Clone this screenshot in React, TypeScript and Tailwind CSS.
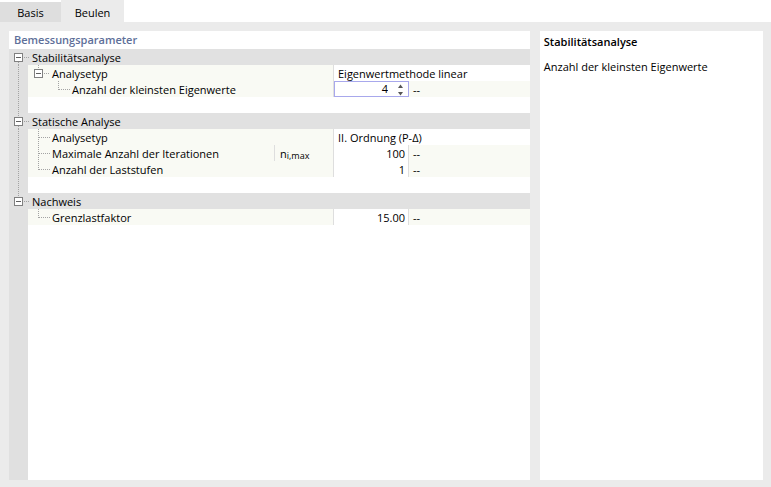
import React, { useState } from "react";

type Param = {
  label: string;
  level: 1 | 2;
  value: string;
  kind: "text" | "number" | "spin";
  symbol?: React.ReactNode;
  expandable?: boolean;
};

type Group = {
  title: string;
  params: Param[];
};

const groups: Group[] = [
  {
    title: "Stabilitätsanalyse",
    params: [
      { label: "Analysetyp", level: 1, value: "Eigenwertmethode linear", kind: "text", expandable: true },
      { label: "Anzahl der kleinsten Eigenwerte", level: 2, value: "4", kind: "spin" },
    ],
  },
  {
    title: "Statische Analyse",
    params: [
      { label: "Analysetyp", level: 1, value: "II. Ordnung (P-Δ)", kind: "text" },
      {
        label: "Maximale Anzahl der Iterationen",
        level: 1,
        value: "100",
        kind: "number",
        symbol: (
          <span className="flex">
            n<span className="pt-[2px] text-[9px]">i,max</span>
          </span>
        ),
      },
      { label: "Anzahl der Laststufen", level: 1, value: "1", kind: "number" },
    ],
  },
  {
    title: "Nachweis",
    params: [{ label: "Grenzlastfaktor", level: 1, value: "15.00", kind: "number" }],
  },
];

const Dots = ({ d }: { d: string }) => (
  <path d={d} fill="none" stroke="#a3a3a3" strokeDasharray="1 1" shapeRendering="crispEdges" />
);

const ToggleBox = ({ x }: { x: number }) => (
  <g shapeRendering="crispEdges">
    <rect x={x + 0.5} y="4.5" width="8" height="8" fill="#fff" stroke="#808080" />
    <path d={`M${x + 2} 8.5h5`} stroke="#606060" />
  </g>
);

// Gutter line that runs from the first group down to the last one
const GutterLine = () => (
  <svg width="19" height="16" className="block">
    <Dots d="M9.5 0v16" />
  </svg>
);

const GroupGutter = ({ first, last }: { first: boolean; last: boolean }) => (
  <svg width="19" height="16" className="block">
    {!first && <Dots d="M9.5 0v4" />}
    {!last && <Dots d="M9.5 13v3" />}
    <Dots d="M15 8.5h4" />
    <ToggleBox x={5} />
  </svg>
);

const Branch = ({ param, last }: { param: Param; last: boolean }) => {
  if (param.expandable) {
    return (
      <button type="button" aria-label="Analysetyp einklappen" className="block">
        <svg width="24" height="16" className="block">
          <Dots d="M10.5 0v4" />
          <Dots d="M16 8.5h6" />
          <ToggleBox x={6} />
        </svg>
      </button>
    );
  }
  if (param.level === 2) {
    return (
      <svg width="44" height="16" className="block">
        <Dots d="M30.5 0v9" />
        <Dots d="M31 8.5h11" />
      </svg>
    );
  }
  return (
    <svg width="24" height="16" className="block">
      <Dots d={last ? "M10.5 0v9" : "M10.5 0v16"} />
      <Dots d="M11 8.5h11" />
    </svg>
  );
};

const SpinBox = ({ label, initial }: { label: string; initial: number }) => {
  const [count, setCount] = useState(initial);
  return (
    <div className="-mr-px flex h-4 border border-[#a8a8ec] bg-white">
      <input
        type="text"
        inputMode="numeric"
        aria-label={label}
        value={count}
        onChange={(e) => setCount(Number(e.target.value) || 0)}
        className="h-[14px] w-full min-w-0 pr-[10px] text-right leading-[14px] outline-none"
      />
      <div className="flex w-[10px] shrink-0 flex-col">
        <button type="button" aria-label="Erhöhen" onClick={() => setCount(count + 1)} className="h-[7px]">
          <svg width="5" height="7" className="block">
            <path d="M0 6h5L2.5 2.5z" fill="#555" />
          </svg>
        </button>
        <button type="button" aria-label="Verringern" onClick={() => setCount(count - 1)} className="h-[7px]">
          <svg width="5" height="7" className="block">
            <path d="M0 3h5L2.5 6.5z" fill="#555" />
          </svg>
        </button>
      </div>
    </div>
  );
};

const Line = ({ children }: { children: React.ReactNode }) => (
  <div className="h-4 leading-[18px]">{children}</div>
);

const ParamRow = ({ param, last, lastGroup }: { param: Param; last: boolean; lastGroup: boolean }) => (
  <tr className="h-4 bg-[#f9faf4]">
    <td className="bg-[#e0e0e0]">{!lastGroup && <GutterLine />}</td>
    <th scope="row" colSpan={param.symbol ? 1 : 2} className="text-left font-normal">
      <div className="flex h-4 leading-[18px]">
        <Branch param={param} last={last} />
        {param.label}
      </div>
    </th>
    {param.symbol && (
      <td className="border-l border-[#dedede] pl-[5px]">
        <Line>{param.symbol}</Line>
      </td>
    )}
    {param.kind === "text" && (
      <td colSpan={2} className="border-l border-[#dedede] bg-white pl-1">
        <Line>{param.value}</Line>
      </td>
    )}
    {param.kind === "number" && (
      <td className="border-l border-[#dedede] bg-white pr-[3px] text-right">
        <Line>{param.value}</Line>
      </td>
    )}
    {param.kind === "spin" && (
      <td className="border-l border-[#dedede]">
        <SpinBox label={param.label} initial={Number(param.value)} />
      </td>
    )}
    {param.kind === "number" && (
      <td className="border-l border-[#dedede] pl-1">
        <Line>--</Line>
      </td>
    )}
    {param.kind === "spin" && (
      <td className="pl-[5px]">
        <Line>--</Line>
      </td>
    )}
  </tr>
);

const ParameterTable = () => (
  <table className="w-full table-fixed border-separate border-spacing-0">
    <colgroup>
      <col className="w-[19px]" />
      <col className="w-[246px]" />
      <col className="w-[59px]" />
      <col className="w-[75px]" />
      <col />
    </colgroup>
    {groups.map((group, g) => {
      const lastGroup = g === groups.length - 1;
      return (
        <tbody key={group.title}>
          <tr className="h-4 bg-[#e1e1e1]">
            <td>
              <button type="button" aria-label={`${group.title} einklappen`} className="block">
                <GroupGutter first={g === 0} last={lastGroup} />
              </button>
            </td>
            <th scope="colgroup" colSpan={4} className="text-left font-normal">
              <div className="flex h-4 leading-[18px]">
                <svg width="4" height="16" className="block">
                  <Dots d="M0 8.5h1" />
                </svg>
                {group.title}
              </div>
            </th>
          </tr>
          {group.params.map((param, i) => (
            <ParamRow
              key={param.label}
              param={param}
              last={i === group.params.length - 1}
              lastGroup={lastGroup}
            />
          ))}
          {!lastGroup && (
            <tr className="h-4">
              <td className="bg-[#e0e0e0]">
                <GutterLine />
              </td>
              <td colSpan={4} />
            </tr>
          )}
        </tbody>
      );
    })}
  </table>
);

const App: React.FC = () => {
  const [tab, setTab] = useState("Beulen");

  return (
    <div className="flex min-h-screen flex-col bg-white font-['Open_Sans','Noto_Sans',sans-serif] text-[11px] text-black">
      {/* Tabs */}
      <div role="tablist" className="flex h-[22px] items-end">
        {["Basis", "Beulen"].map((name) => (
          <button
            key={name}
            type="button"
            role="tab"
            aria-selected={tab === name}
            onClick={() => setTab(name)}
            className={
              tab === name
                ? "h-[22px] w-[63px] bg-[#ebebeb] pt-1 leading-[18px]"
                : "h-5 w-[61px] bg-[#dedede] pt-[2px] leading-[18px]"
            }
          >
            {name}
          </button>
        ))}
      </div>

      <div className="flex flex-1 gap-[10px] bg-[#ebebeb] pt-[9px] pr-2 pb-[7px] pl-[9px]">
        {/* Parameter grid */}
        <section className="flex flex-[7] flex-col bg-white">
          <h2 className="h-[18px] pl-[5px] font-semibold leading-[18px] text-[#5e6f99]">Bemessungsparameter</h2>
          <ParameterTable />
          <div className="w-[19px] flex-1 bg-[#e0e0e0]" />
        </section>

        {/* Description */}
        <aside className="flex-[3] bg-white">
          <div className="px-1 pt-[3px] leading-4">
            <h2 className="font-semibold">Stabilitätsanalyse</h2>
            <p className="pt-[9px]">Anzahl der kleinsten Eigenwerte</p>
          </div>
        </aside>
      </div>
    </div>
  );
};

export default App;
